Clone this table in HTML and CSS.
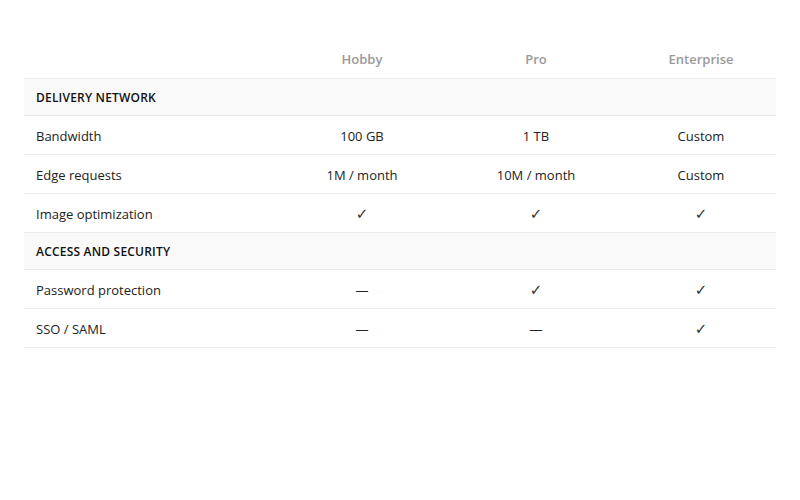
FILE: index.html
```html
<!DOCTYPE html>
<html>
<head>
<meta charset="utf-8">
<link rel="stylesheet" href="styles.css">
</head>
<body>
<div class="page">
<table class="compare">
  <colgroup>
    <col class="c-label"><col class="c-hobby"><col class="c-pro"><col class="c-ent">
  </colgroup>
  <thead>
    <tr><th></th><th>Hobby</th><th>Pro</th><th>Enterprise</th></tr>
  </thead>
  <tbody>
    <tr class="section"><td colspan="4">DELIVERY NETWORK</td></tr>
    <tr><td>Bandwidth</td><td>100 GB</td><td>1 TB</td><td>Custom</td></tr>
    <tr><td>Edge requests</td><td>1M / month</td><td>10M / month</td><td>Custom</td></tr>
    <tr><td>Image optimization</td><td><span class="yes">✓</span></td><td><span class="yes">✓</span></td><td><span class="yes">✓</span></td></tr>
    <tr class="section"><td colspan="4">ACCESS AND SECURITY</td></tr>
    <tr><td>Password protection</td><td>—</td><td><span class="yes">✓</span></td><td><span class="yes">✓</span></td></tr>
    <tr><td>SSO / SAML</td><td>—</td><td>—</td><td><span class="yes">✓</span></td></tr>
  </tbody>
</table>
</div>
</body>
</html>
```
FILE: styles.css
```css
html, body { margin: 0; padding: 0; background: #fff; }
body { font-family: "Open Sans", "Noto Sans", sans-serif; color: #222; }
.page { padding: 40px 24px; }
.compare { width: 752px; border-collapse: collapse; table-layout: fixed; font-size: 13px; }
.c-label { width: 254px; }
.c-hobby { width: 168px; }
.c-pro { width: 180px; }
.c-ent { width: 150px; }
.compare th { height: 38px; padding: 0 12px; font-weight: 600; color: #999; text-align: center; border-bottom: 1px solid #ebebeb; }
.compare td { height: 39px; padding: 1px 12px 0; text-align: center; border-bottom: 1px solid #ebebeb; box-sizing: border-box; }
.compare td:first-child { text-align: left; }
.compare tr.section td { height: 37px; background: #f9f9f9; font-size: 12px; font-weight: 600; color: #111; letter-spacing: 0.2px; }
.yes { font-family: "DejaVu Sans", sans-serif; font-size: 15px; line-height: 1; color: #333; }
```
